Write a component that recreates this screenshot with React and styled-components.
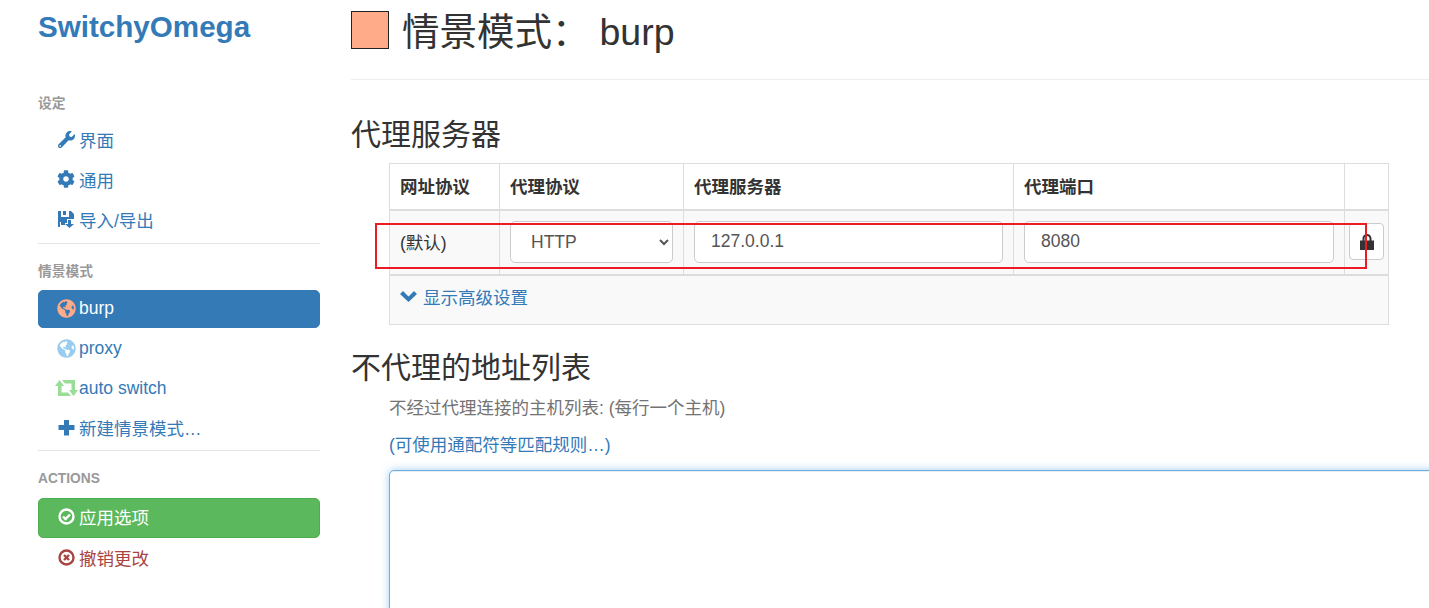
import styled, { createGlobalStyle } from 'styled-components';
import { FaWrench, FaCog, FaGlobeAmericas } from 'react-icons/fa';

const blue = '#337ab7';

const GlobalStyle = createGlobalStyle`
  html, body { margin: 0; padding: 0; background: #fff; }
  body {
    width: 1429px;
    height: 608px;
    overflow: hidden;
    font-family: "Liberation Sans", "Noto Sans CJK SC", sans-serif;
    font-size: 17.5px;
    color: #333;
  }
`;

const Page = styled.div`
  display: flex;
  width: 1429px;
  height: 608px;
  overflow: hidden;
  position: relative;
`;

const Sidebar = styled.aside`
  flex: none;
  width: 282px;
  margin-left: 38px;
  margin-right: 31px;
`;

const Brand = styled.a`
  display: block;
  height: 82px;
  padding-top: 9px;
  box-sizing: border-box;
  font-size: 29.6px;
  line-height: 36px;
  font-weight: bold;
  color: ${blue};
`;

const NavHeader = styled.div`
  height: ${p => p.$height}px;
  line-height: ${p => p.$line}px;
  font-size: 13.75px;
  font-weight: bold;
  color: #999;
`;

const NavItem = styled.a`
  display: flex;
  align-items: center;
  box-sizing: border-box;
  height: ${p => p.$tall ? 40 : 38}px;
  margin-bottom: 2px;
  padding: 0 0 ${p => p.$cjk ? 4 : 2}px 18px;
  border-radius: 5px;
  color: ${p => p.$color || blue};
  background: ${p => p.$bg || 'transparent'};
  border: 1px solid ${p => p.$border || 'transparent'};
`;

const NavIcon = styled.span`
  display: flex;
  justify-content: center;
  align-items: center;
  flex: none;
  width: 18px;
  margin-right: 4px;
  color: ${p => p.$color || 'inherit'};
  font-size: ${p => p.$size || 17}px;
  svg { flex: none; }
`;

const Divider = styled.hr`
  border: none;
  border-top: 1px solid #e5e5e5;
  margin: ${p => p.$margin || '0'};
`;

const Main = styled.main`
  flex: none;
  width: 1078px;
`;

const PageTitle = styled.h1`
  display: flex;
  align-items: center;
  height: 80px;
  box-sizing: border-box;
  margin: 0;
  padding-bottom: 19px;
  border-bottom: 1px solid #eee;
  font-size: 37.5px;
  font-weight: 400;
  line-height: 1;
`;

const Swatch = styled.span`
  box-sizing: border-box;
  width: 38px;
  height: 38px;
  margin-right: 13px;
  background: #ffaa88;
  border: 1px solid #222;
`;

const TitleText = styled.span`
  padding-top: 5px;
`;

const ProfileName = styled.span`
  margin-left: 10px;
`;

const SectionTitle = styled.h3`
  margin: ${p => p.$margin};
  font-size: 30px;
  font-weight: 400;
  line-height: 36px;
`;

const Indented = styled.div`
  margin-left: 38px;
`;

const Table = styled.table`
  border-collapse: collapse;
  table-layout: fixed;
  width: 999px;
  border: 1px solid #ddd;
  th, td { border: 1px solid #ddd; padding: 0 10px; text-align: left; box-sizing: border-box; }
  th { height: 46px; padding-bottom: 1px; font-weight: bold; border-bottom-width: 2px; }
  td { background: #f9f9f9; }
  tbody td { height: 65px; border-bottom-width: 2px; padding-bottom: 1px; }
  tfoot td { height: 50px; padding-bottom: 7px; }
`;

const Select = styled.select`
  width: 100%;
  height: 42px;
  box-sizing: border-box;
  padding: 0 0 0 16px;
  border: 1px solid #ccc;
  border-radius: 5px;
  background: #fff;
  color: #555;
  font: inherit;
`;

const Input = styled.input`
  width: 100%;
  height: 42px;
  box-sizing: border-box;
  padding: 0 16px;
  border: 1px solid #ccc;
  border-radius: 5px;
  background: #fff;
  color: #555;
  font: inherit;
`;

const LockButton = styled.button`
  display: flex;
  align-items: center;
  justify-content: center;
  width: 35px;
  height: 37px;
  margin-left: -6px;
  padding: 0;
  border: 1px solid #ccc;
  border-radius: 4px;
  background: #fff;
  color: #333;
`;

const AdvancedLink = styled.a`
  display: inline-flex;
  align-items: center;
  gap: 6px;
  color: ${blue};
`;

const Help = styled.p`
  margin: ${p => p.$margin};
  line-height: 25px;
  color: ${p => p.$link ? blue : '#737373'};
`;

const HostList = styled.textarea`
  display: block;
  width: 1100px;
  height: 200px;
  box-sizing: border-box;
  margin-top: 12px;
  border: 1px solid #66afe9;
  border-radius: 5px;
  outline: none;
  box-shadow: inset 0 1px 1px rgba(0,0,0,.075), 0 0 8px rgba(102,175,233,.6);
`;

const Highlight = styled.div`
  position: absolute;
  left: 375px;
  top: 223px;
  width: 992px;
  height: 46px;
  box-sizing: border-box;
  border: 2px solid #ed1c24;
  pointer-events: none;
`;

const SaveIcon = () => (
  <svg width="17" height="17" viewBox="0 0 17 17" fill="currentColor">
    <path d="M0 0h3v6h8V0h2l3 3v5H9v4H7v2H3v-3H2v5H0z" />
    <path d="M5 0h3v4H5z" />
    <path d="M10 9h3v4h3l-4.500 4L7 13h3z" />
  </svg>
);

const RetweetIcon = () => (
  <svg width="23" height="16" viewBox="0 0 23 16" fill="currentColor">
    <path d="M4.500 0L9 6H6.500v6.500H13l3 3.500H3V6H0z" />
    <path d="M7 0H20v10H23L18.500 16L14 10h2.500V3.500H10z" />
  </svg>
);

const PlusIcon = () => (
  <svg width="17" height="17" viewBox="0 0 17 17" fill="currentColor">
    <path d="M6 1h5v5h5.500v5H11v5.500H6V11H.5V6H6z" />
  </svg>
);

const OkCircle = () => (
  <svg width="17" height="17" viewBox="0 0 17 17">
    <circle cx="8.500" cy="8.500" r="7" fill="none" stroke="currentColor" strokeWidth="2.400" />
    <path d="M5 8.500l2.500 2.500L12 6.500" fill="none" stroke="currentColor" strokeWidth="2.400" />
  </svg>
);

const RemoveCircle = () => (
  <svg width="17" height="17" viewBox="0 0 17 17">
    <circle cx="8.500" cy="8.500" r="7" fill="none" stroke="currentColor" strokeWidth="2.400" />
    <path d="M6 6l5 5M11 6l-5 5" fill="none" stroke="currentColor" strokeWidth="2.400" />
  </svg>
);

const LockIcon = () => (
  <svg width="14" height="16" viewBox="0 0 14 16" fill="currentColor">
    <path d="M0 6.500h2.500V4.500C2.500 2 4.500 0 7 0s4.500 2 4.500 4.500v2H14V16H0zM4.500 6.500h5V4.500C9.500 3 8.500 2 7 2S4.500 3 4.500 4.500z" />
  </svg>
);

const ChevronIcon = () => (
  <svg width="17" height="11" viewBox="0 0 17 11" fill="currentColor">
    <path d="M0 3L3 0l5.500 5.500L14 0l3 3-8.500 8z" />
  </svg>
);

export default function App() {
  return (
    <Page>
      <GlobalStyle />
      <Sidebar>
        <Brand>SwitchyOmega</Brand>
        <NavHeader $height={40} $line={44}>设定</NavHeader>
        <NavItem $cjk><NavIcon><FaWrench /></NavIcon>界面</NavItem>
        <NavItem $cjk><NavIcon $size={18}><FaCog /></NavIcon>通用</NavItem>
        <NavItem $cjk><NavIcon><SaveIcon /></NavIcon>导入/导出</NavItem>
        <Divider $margin="3px 0 0" />
        <NavHeader $height={46} $line={56}>情景模式</NavHeader>
        <NavItem $bg={blue} $border={blue} $color="#fff"><NavIcon $color="#ffaa88" $size={19}><FaGlobeAmericas /></NavIcon>burp</NavItem>
        <NavItem><NavIcon $color="#99ccee" $size={19}><FaGlobeAmericas /></NavIcon>proxy</NavItem>
        <NavItem><NavIcon $color="#99dd99"><RetweetIcon /></NavIcon>auto switch</NavItem>
        <NavItem $cjk><NavIcon><PlusIcon /></NavIcon>新建情景模式…</NavItem>
        <Divider />
        <NavHeader $height={47} $line={56}>ACTIONS</NavHeader>
        <NavItem $cjk $tall $bg="#5cb85c" $border="#4cae4c" $color="#fff"><NavIcon><OkCircle /></NavIcon>应用选项</NavItem>
        <NavItem $cjk $color="#a94442"><NavIcon><RemoveCircle /></NavIcon>撤销更改</NavItem>
      </Sidebar>
      <Main>
        <PageTitle>
          <Swatch />
          <TitleText>情景模式：<ProfileName>burp</ProfileName></TitleText>
        </PageTitle>
        <SectionTitle $margin="37px 0 10px">代理服务器</SectionTitle>
        <Indented>
          <Table>
            <colgroup>
              <col style={{ width: 110 }} />
              <col style={{ width: 184 }} />
              <col style={{ width: 330 }} />
              <col style={{ width: 331 }} />
              <col style={{ width: 44 }} />
            </colgroup>
            <thead>
              <tr>
                <th>网址协议</th>
                <th>代理协议</th>
                <th>代理服务器</th>
                <th>代理端口</th>
                <th />
              </tr>
            </thead>
            <tbody>
              <tr>
                <td>(默认)</td>
                <td>
                  <Select defaultValue="HTTP">
                    <option>HTTP</option>
                    <option>HTTPS</option>
                    <option>SOCKS4</option>
                    <option>SOCKS5</option>
                  </Select>
                </td>
                <td><Input defaultValue="127.0.0.1" /></td>
                <td><Input defaultValue="8080" /></td>
                <td><LockButton><LockIcon /></LockButton></td>
              </tr>
            </tbody>
            <tfoot>
              <tr>
                <td colSpan={5}>
                  <AdvancedLink><ChevronIcon />显示高级设置</AdvancedLink>
                </td>
              </tr>
            </tfoot>
          </Table>
        </Indented>
        <SectionTitle $margin="25px 0 0">不代理的地址列表</SectionTitle>
        <Indented>
          <Help $margin="10px 0 0">不经过代理连接的主机列表: (每行一个主机)</Help>
          <Help $margin="12px 0 0" $link>(可使用通配符等匹配规则…)</Help>
          <HostList />
        </Indented>
      </Main>
      <Highlight />
    </Page>
  );
}
